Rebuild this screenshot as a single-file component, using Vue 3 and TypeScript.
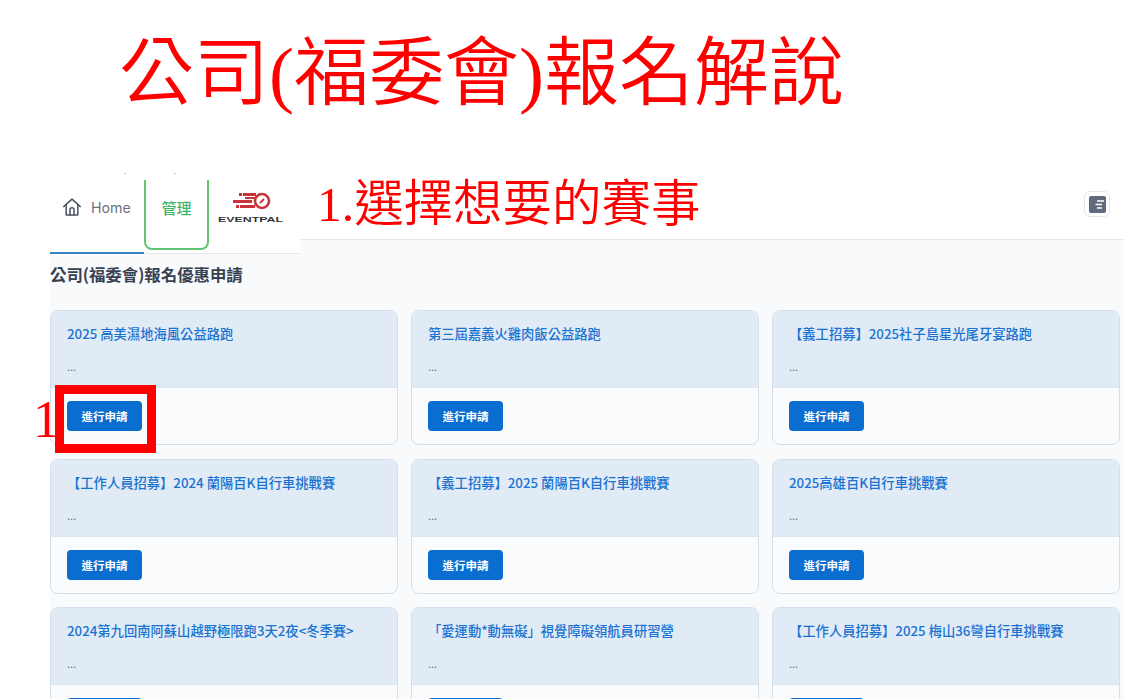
<script setup lang="ts">
const cards: string[] = [
  '2025 高美濕地海風公益路跑',
  '第三屆嘉義火雞肉飯公益路跑',
  '【義工招募】2025社子島星光尾牙宴路跑',
  '【工作人員招募】2024 蘭陽百K自行車挑戰賽',
  '【義工招募】2025 蘭陽百K自行車挑戰賽',
  '2025高雄百K自行車挑戰賽',
  '2024第九回南阿蘇山越野極限跑3天2夜<冬季賽>',
  '「愛運動*動無礙」視覺障礙領航員研習營',
  '【工作人員招募】2025 梅山36彎自行車挑戰賽',
]
</script>

<template>
  <div class="slide">
    <h1 class="title">公司(福委會)報名解說</h1>
    <div class="screen">
      <span class="speck speck-left"></span>
      <span class="speck speck-right"></span>
      <header class="topbar">
        <nav class="tabs">
          <div class="tab home">
            <svg class="home-icon" viewBox="0 0 24 24" fill="none" stroke="#4b5563" stroke-width="1.8" stroke-linecap="round" stroke-linejoin="round">
              <path d="M2 11.5 12 2.5l10 9" />
              <path d="M5 9.5V21.5h14V9.5" />
              <path d="M9.5 21.5v-6a2.5 2.5 0 0 1 5 0v6" />
            </svg>
            <span>Home</span>
          </div>
          <div class="tab manage">管理</div>
          <div class="logo">
            <svg width="68" height="34" viewBox="0 0 68 34">
              <g fill="#c9343c">
                <rect x="23" y="3" width="3" height="3" />
                <rect x="27" y="3" width="13" height="3" />
                <rect x="29" y="7" width="11" height="2" />
                <rect x="17" y="10" width="19" height="3" />
                <rect x="20" y="15" width="3" height="3" />
                <rect x="24" y="15" width="15" height="3" />
              </g>
              <circle cx="46" cy="11" r="7" fill="none" stroke="#c9343c" stroke-width="2.6" />
              <path d="M44 13l4-4" stroke="#c9343c" stroke-width="1.8" />
              <text x="34.5" y="32" class="logo-text" text-anchor="middle" textLength="65" lengthAdjust="spacingAndGlyphs">EVENTPAL</text>
            </svg>
          </div>
        </nav>
        <button class="side-btn" type="button" aria-label="menu">
          <svg viewBox="0 0 17 17" width="17" height="17">
            <rect width="17" height="17" rx="2" fill="#5f6b7d" />
            <path d="M8 5h7M6.5 8.5H13M8 12h5" stroke="#fff" stroke-width="1.4" />
          </svg>
        </button>
      </header>
      <main class="content">
        <h2 class="heading">公司(福委會)報名優惠申請</h2>
        <div class="grid">
          <article v-for="(c, i) in cards" :key="i" class="card">
            <div class="card-head">
              <div class="card-title">{{ c }}</div>
              <div class="dots">...</div>
            </div>
            <div class="card-foot">
              <button class="apply" type="button">進行申請</button>
            </div>
          </article>
        </div>
      </main>
      <div class="step-label">1.選擇想要的賽事</div>
      <div class="highlight"></div>
      <div class="one">1</div>
    </div>
  </div>
</template>

<style>
html, body { margin: 0; height: 100%; overflow: hidden; background: #fff; }
</style>

<style scoped>
.slide {
  width: 1124px;
  height: 699px;
  overflow: hidden;
  background: #fff;
  font-family: "Noto Sans CJK TC", "Noto Sans", sans-serif;
}
.title {
  margin: 0;
  height: 180px;
  box-sizing: border-box;
  padding: 26px 0 0 119px;
  font-family: "Liberation Serif", "Noto Sans CJK TC", serif;
  font-weight: 350;
  font-size: 75px;
  line-height: 96px;
  color: #ff0000;
  white-space: nowrap;
}
.screen {
  position: relative;
  margin-left: 50px;
  height: 519px;
  background: #f8fafc;
}
.speck {
  position: absolute;
  top: -7px;
  width: 2px;
  height: 1px;
  background: #a9dcb4;
}
.speck-left { left: 74px; }
.speck-right { left: 124px; }
.topbar {
  display: flex;
  justify-content: space-between;
  height: 59px;
  background: #fff;
  border-bottom: 1px solid #e5e7eb;
}
.tabs {
  display: flex;
  width: 250px;
  height: 74px;
  background: #fff;
  position: relative;
  border-bottom: 1px solid #e5e7eb;
  box-sizing: border-box;
}
.tab {
  display: flex;
  align-items: center;
  box-sizing: border-box;
  height: 70px;
  font-size: 14px;
}
.home {
  width: 94px;
  height: 74px;
  padding: 0 0 18px 12px;
  gap: 9px;
  color: #6b7280;
  font-family: "Inter", "Noto Sans", sans-serif;
  font-size: 14.2px;
  border-bottom: 2px solid #3b82c4;
}
.home-icon { width: 20px; height: 20px; }
.manage {
  width: 65px;
  justify-content: center;
  color: #3fb56b;
  border: 2px solid #62c674;
  border-top: 0;
  border-radius: 0 0 8px 8px;
  padding-bottom: 14px;
  height: 70px;
  font-size: 15px;
  font-weight: 500;
}
.logo {
  width: 72px;
  padding: 10px 0 0 7px;
  box-sizing: border-box;
}
.logo-text {
  font-family: "Liberation Sans", sans-serif;
  font-size: 8px;
  font-weight: 700;
  fill: #333;
}
.side-btn {
  display: flex;
  align-items: center;
  justify-content: center;
  width: 26px;
  height: 26px;
  padding: 0;
  margin: 11px 14px 0 0;
  background: #fff;
  border: 1px solid #e5e7eb;
  border-radius: 6px;
}
.content { padding: 0 4px 0 0; }
.heading {
  margin: 0;
  padding-top: 22px;
  font-size: 16.4px;
  line-height: 24px;
  height: 70px;
  box-sizing: border-box;
  font-weight: 700;
  color: #374151;
  position: relative;
}
.grid {
  display: grid;
  grid-template-columns: repeat(3, 348px);
  column-gap: 13px;
  row-gap: 13.5px;
}
.card {
  height: 135px;
  box-sizing: border-box;
  border: 1px solid #d5dfeb;
  border-radius: 8px;
  overflow: hidden;
  background: #fafbfd;
}
.card-head {
  height: 77px;
  box-sizing: border-box;
  padding: 13px 16px 0;
  background: #e1ebf6;
  border-bottom: 1px solid #dde6f0;
}
.card-title {
  font-size: 13.3px;
  line-height: 20px;
  font-weight: 500;
  color: #1a73d1;
  white-space: nowrap;
}
.dots {
  margin-top: 14px;
  font-size: 11px;
  line-height: 16px;
  color: #6b7280;
}
.card-foot { padding: 13px 16px; }
.apply {
  display: block;
  width: 75px;
  height: 30px;
  padding: 0;
  border: 0;
  border-radius: 4px;
  background: #0a6ed1;
  color: #fff;
  font-family: inherit;
  font-size: 11.5px;
  font-weight: 700;
}
.step-label {
  position: absolute;
  left: 267px;
  top: -3px;
  font-family: "Liberation Serif", "Noto Sans CJK TC", serif;
  font-size: 49.5px;
  line-height: 56px;
  font-weight: 350;
  color: #ff0000;
  white-space: nowrap;
}
.highlight {
  position: absolute;
  left: 5px;
  top: 205px;
  width: 101px;
  height: 68px;
  box-sizing: border-box;
  border: 9px solid #ff0000;
}
.one {
  position: absolute;
  left: -17px;
  top: 211px;
  font-family: "Liberation Serif", serif;
  font-size: 53px;
  line-height: 56px;
  color: #ff0000;
}
</style>
